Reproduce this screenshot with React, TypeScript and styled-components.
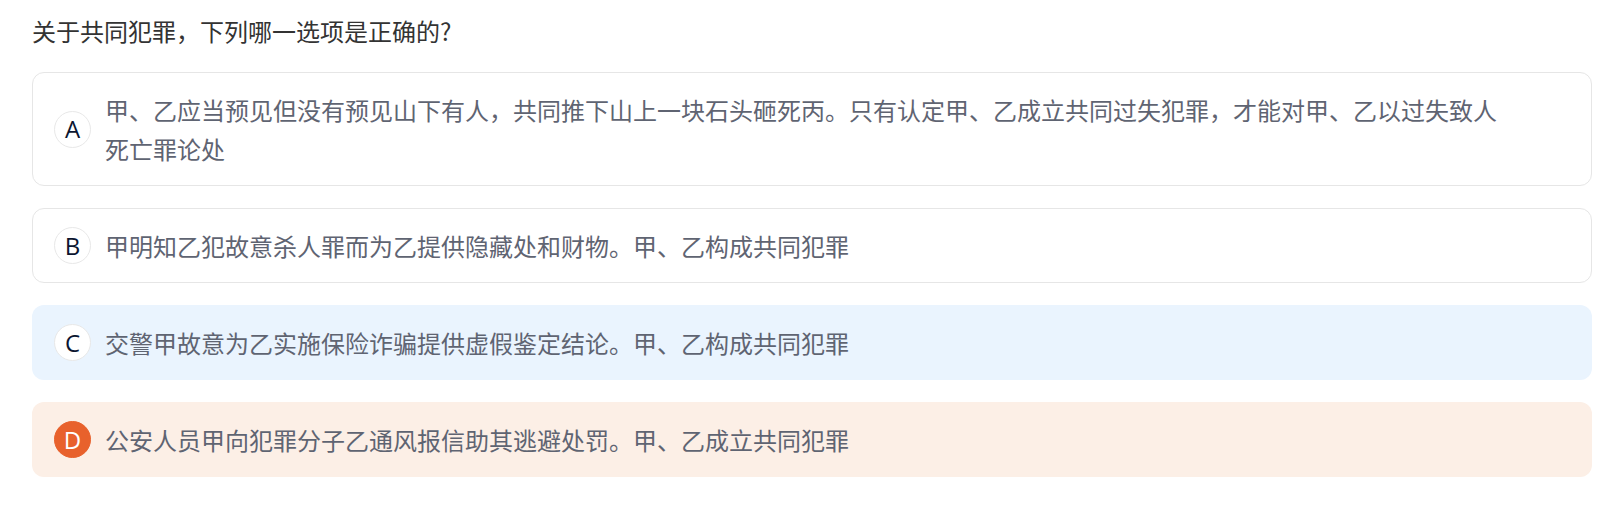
import styled, { createGlobalStyle } from "styled-components";

const GlobalStyle = createGlobalStyle`
  body {
    margin: 0;
    background: #ffffff;
    font-family: "Noto Sans CJK SC", "Noto Sans", sans-serif;
  }
`;

const Wrapper = styled.div`
  padding: 11px 7px 0 32px;
  display: flex;
  flex-direction: column;
`;

const Question = styled.div`
  font-size: 24px;
  line-height: 39px;
  color: #333333;
  margin-bottom: 22px;
`;

const Options = styled.div`
  display: flex;
  flex-direction: column;
  gap: 22px;
`;

type Tone = "plain" | "info" | "picked";

const Card = styled.div<{ $tone: Tone }>`
  display: flex;
  align-items: center;
  gap: 14px;
  padding: 17px 80px 17px 21px;
  border-radius: 12px;
  border: 1px solid ${(p) => (p.$tone === "plain" ? "#e6e6e6" : "transparent")};
  background: ${(p) =>
    p.$tone === "info" ? "#eaf4fe" : p.$tone === "picked" ? "#fcefe6" : "#ffffff"};
`;

const Letter = styled.div<{ $tone: Tone }>`
  flex: 0 0 auto;
  width: 37px;
  height: 37px;
  border-radius: 50%;
  box-sizing: border-box;
  display: flex;
  align-items: center;
  justify-content: center;
  font-family: "Open Sans", "Noto Sans", sans-serif;
  font-size: 24px;
  line-height: 1;
  border: 1px solid ${(p) => (p.$tone === "picked" ? "#e8612c" : "#e8e8e8")};
  background: ${(p) => (p.$tone === "picked" ? "#e8612c" : "#ffffff")};
  color: ${(p) => (p.$tone === "picked" ? "#ffffff" : "#0b1530")};
`;

const Text = styled.div`
  font-size: 24px;
  line-height: 39px;
  color: #5f6472;
`;

type Option = { key: string; text: string; tone: Tone };

const options: Option[] = [
  {
    key: "A",
    text: "甲、乙应当预见但没有预见山下有人，共同推下山上一块石头砸死丙。只有认定甲、乙成立共同过失犯罪，才能对甲、乙以过失致人死亡罪论处",
    tone: "plain",
  },
  { key: "B", text: "甲明知乙犯故意杀人罪而为乙提供隐藏处和财物。甲、乙构成共同犯罪", tone: "plain" },
  { key: "C", text: "交警甲故意为乙实施保险诈骗提供虚假鉴定结论。甲、乙构成共同犯罪", tone: "info" },
  { key: "D", text: "公安人员甲向犯罪分子乙通风报信助其逃避处罚。甲、乙成立共同犯罪", tone: "picked" },
];

export default function App() {
  return (
    <>
      <GlobalStyle />
      <Wrapper>
        <Question>关于共同犯罪，下列哪一选项是正确的?</Question>
        <Options>
          {options.map((o) => (
            <Card key={o.key} $tone={o.tone}>
              <Letter $tone={o.tone}>{o.key}</Letter>
              <Text>{o.text}</Text>
            </Card>
          ))}
        </Options>
      </Wrapper>
    </>
  );
}
